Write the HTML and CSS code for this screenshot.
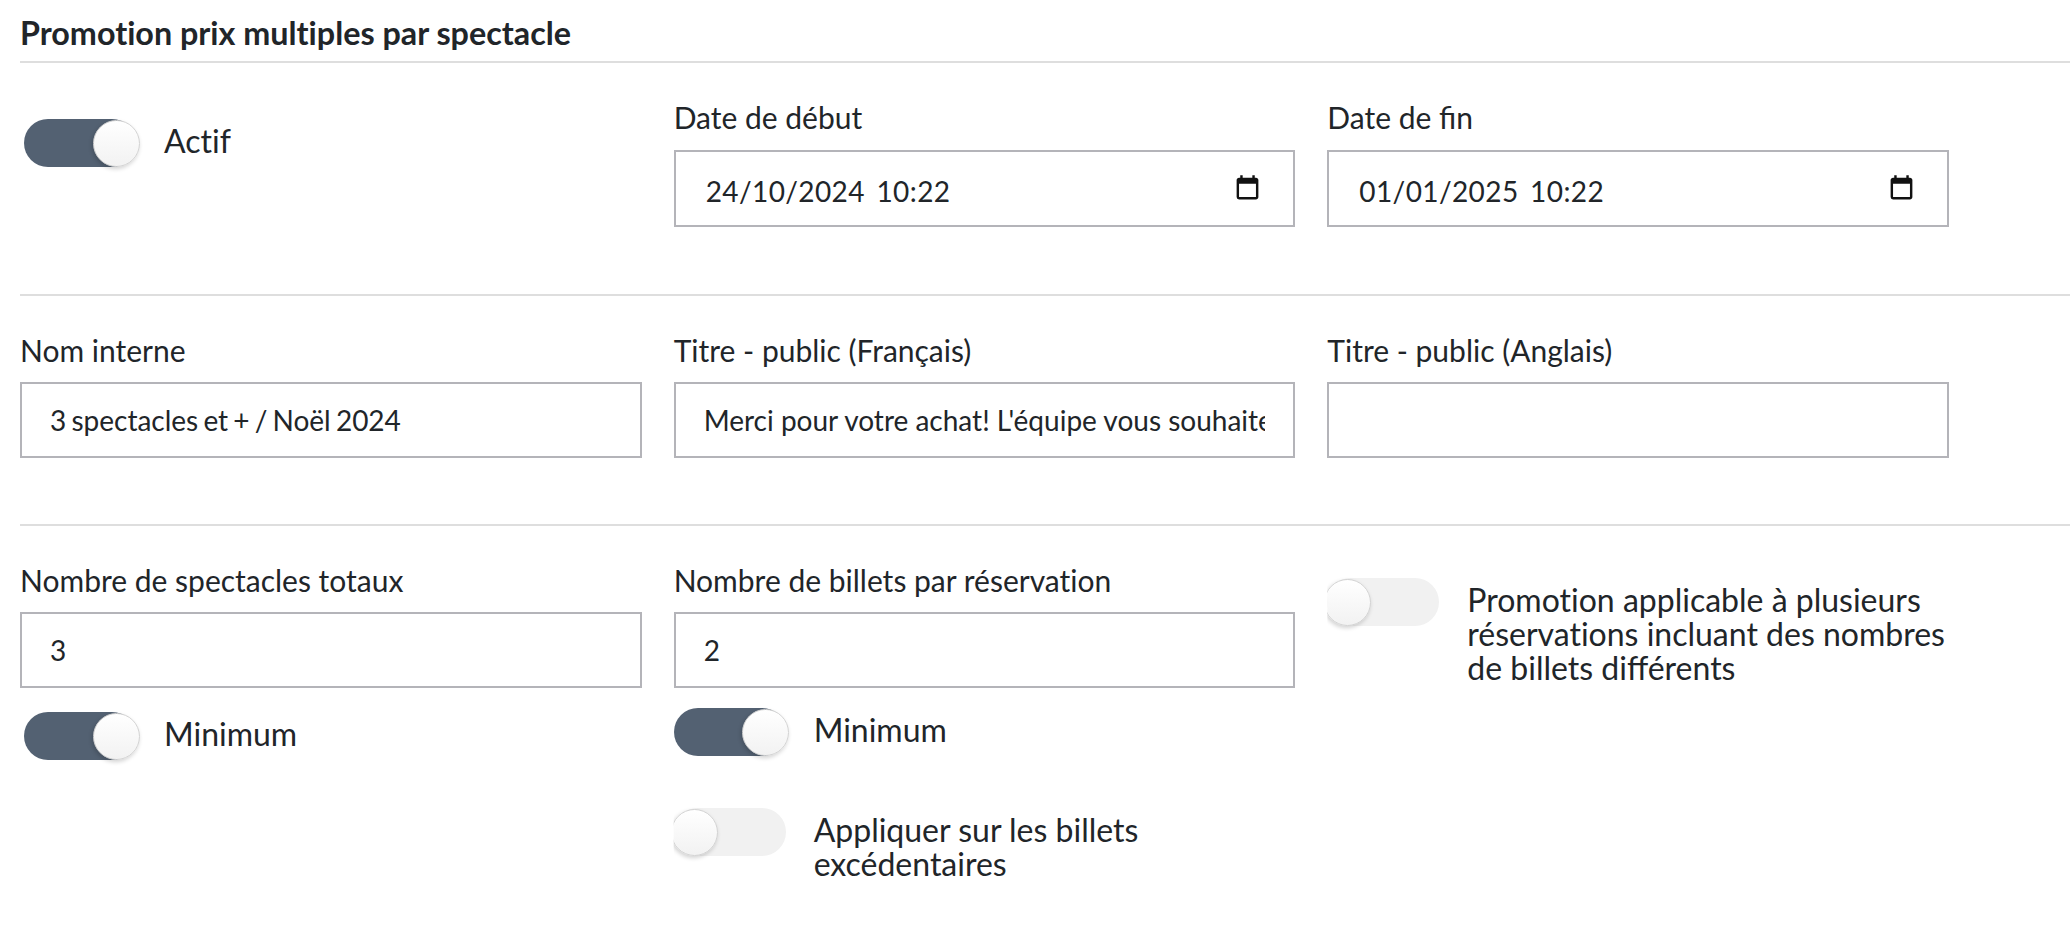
FILE: index.html
```html
<!DOCTYPE html>
<html lang="fr">
<head>
<meta charset="utf-8">
<title>Promotion prix multiples par spectacle</title>
<link rel="stylesheet" href="styles.css">
</head>
<body>
<main class="page">
  <h2 class="title">Promotion prix multiples par spectacle</h2>

  <section class="row row-dates">
    <div class="col col-active">
      <div class="switch-line">
        <span class="switch on"><span class="knob"></span></span>
        <span class="switch-label">Actif</span>
      </div>
    </div>
    <div class="col">
      <label class="field-label">Date de début</label>
      <div class="input date-input">
        <span class="date-value">24/10/2024 10:22</span>
        <svg class="cal" viewBox="0 0 24 24"><path d="M19 3h-1V1h-2v2H8V1H6v2H5c-1.11 0-2 .9-2 2v14a2 2 0 0 0 2 2h14c1.1 0 2-.9 2-2V5c0-1.1-.9-2-2-2zm0 16H5V8h14v11z"/></svg>
      </div>
    </div>
    <div class="col">
      <label class="field-label lig">Date de fin</label>
      <div class="input date-input">
        <span class="date-value">01/01/2025 10:22</span>
        <svg class="cal" viewBox="0 0 24 24"><path d="M19 3h-1V1h-2v2H8V1H6v2H5c-1.11 0-2 .9-2 2v14a2 2 0 0 0 2 2h14c1.1 0 2-.9 2-2V5c0-1.1-.9-2-2-2zm0 16H5V8h14v11z"/></svg>
      </div>
    </div>
  </section>

  <section class="row row-names">
    <div class="col">
      <label class="field-label">Nom interne</label>
      <input class="input text-input tight" type="text" value="3 spectacles et + / Noël 2024">
    </div>
    <div class="col">
      <label class="field-label">Titre - public (Français)</label>
      <input class="input text-input" type="text" value="Merci pour votre achat! L'équipe vous souhaite">
    </div>
    <div class="col">
      <label class="field-label">Titre - public (Anglais)</label>
      <input class="input text-input" type="text" value="">
    </div>
  </section>

  <section class="row row-counts">
    <div class="col">
      <label class="field-label">Nombre de spectacles totaux</label>
      <input class="input text-input" type="text" value="3">
      <div class="switch-line min-a">
        <span class="switch on"><span class="knob"></span></span>
        <span class="switch-label">Minimum</span>
      </div>
    </div>
    <div class="col">
      <label class="field-label">Nombre de billets par réservation</label>
      <input class="input text-input" type="text" value="2">
      <div class="switch-line min-b">
        <span class="switch on"><span class="knob"></span></span>
        <span class="switch-label">Minimum</span>
      </div>
      <div class="switch-line excess">
        <span class="switch"><span class="knob"></span></span>
        <span class="switch-label">Appliquer sur les billets excédentaires</span>
      </div>
    </div>
    <div class="col col-multi">
      <div class="switch-line">
        <span class="switch"><span class="knob"></span></span>
        <span class="switch-label">Promotion applicable à plusieurs réservations incluant des nombres de billets <span class="lig">différents</span></span>
      </div>
    </div>
  </section>
</main>
</body>
</html>
```
FILE: styles.css
```css
* { box-sizing: border-box; }
html, body { margin: 0; background: #fff; }
body {
  font-family: Lato, "Liberation Sans", sans-serif;
  font-variant-ligatures: none;
  color: #212529;
  height: 940px;
  overflow: hidden;
}
.lig { font-variant-ligatures: normal; }
.page { padding-left: 20px; }
.title {
  margin: 0;
  height: 63px;
  padding-top: 14px;
  font-size: 32.3px;
  line-height: 38px;
  font-weight: 700;
  border-bottom: 2px solid #dedede;
}
.row {
  display: grid;
  grid-template-columns: repeat(3, 653.67px);
  border-bottom: 2px solid #dedede;
}
.row-dates { height: 233px; padding-top: 36px; }
.row-names { height: 230px; padding-top: 36px; }
.row-counts { border-bottom: 0; padding-top: 36px; }
.col { padding-right: 32px; min-width: 0; }
.field-label {
  display: block;
  font-size: 30px;
  line-height: 36px;
  margin-bottom: 14px;
}
.row-dates .field-label { margin-bottom: 15px; }
.input {
  display: block;
  width: 100%;
  height: 76px;
  border: 2px solid #b4b4b9;
  background: #fff;
  font-family: inherit;
  font-variant-ligatures: none;
  font-size: 28px;
  color: #212529;
  padding: 0 28px;
  border-radius: 0;
  outline: 0;
}
.tight { word-spacing: -2px; }
.date-input {
  height: 77px;
  display: flex;
  align-items: center;
  justify-content: space-between;
  padding: 0 31px 0 30px;
}
.date-value { word-spacing: 4px; letter-spacing: 0.4px; padding-top: 4px; }
.cal { width: 29px; height: 29px; fill: #111; }
.switch-line {
  display: flex;
  align-items: flex-start;
  gap: 28px;
}
.switch {
  position: relative;
  flex: 0 0 112px;
  width: 112px;
  height: 48px;
  border-radius: 24px;
  background: #f1f1f1;
  clip-path: inset(-10px -10px -10px 0);
}
.switch.on { background: #536172; }
.knob {
  position: absolute;
  top: 0.5px;
  left: -3px;
  width: 47px;
  height: 47px;
  border-radius: 50%;
  background: linear-gradient(#fff, #f2f2f2);
  border: 1px solid #d2d2d2;
  box-shadow: -1px 2px 4px rgba(0, 0, 0, 0.18);
}
.switch.on .knob { left: 68.5px; }
.switch-label {
  font-size: 32px;
  line-height: 34px;
}
.col-active { padding-top: 20px; padding-left: 4px; }
.col-active .switch-label { padding-top: 5px; }
.min-a { margin-top: 24px; margin-left: 4px; }
.min-a .switch-label { padding-top: 5px; }
.min-b { margin-top: 20px; }
.min-b .switch-label { padding-top: 5px; }
.excess { margin-top: 52px; }
.excess .switch-label { padding-top: 5px; }
.col-multi { padding-top: 16px; }
.col-multi .switch-label { padding-top: 5px; }
```
